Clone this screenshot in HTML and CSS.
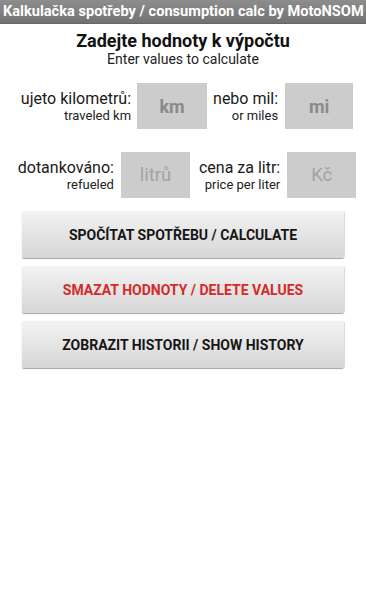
FILE: index.html
```html
<!DOCTYPE html>
<html lang="cs">
<head>
<meta charset="utf-8">
<title>Kalkulačka spotřeby</title>
<link rel="stylesheet" href="styles.css">
</head>
<body>
<header class="titlebar">Kalkulačka spotřeby / consumption calc by MotoNSOM</header>
<main class="content">
  <h1 class="heading">Zadejte hodnoty k výpočtu</h1>
  <p class="subheading">Enter values to calculate</p>

  <div class="row row-first">
    <div class="label"><span class="main">ujeto kilometrů:</span><span class="sub">traveled km</span></div>
    <div class="box box-strong">km</div>
    <div class="label"><span class="main">nebo mil:</span><span class="sub">or miles</span></div>
    <div class="box box-strong box-narrow">mi</div>
  </div>

  <div class="row row-second">
    <div class="label"><span class="main">dotankováno:</span><span class="sub">refueled</span></div>
    <div class="box box-hint">litrů</div>
    <div class="label label-wide"><span class="main">cena za litr:</span><span class="sub">price per liter</span></div>
    <div class="box box-hint">Kč</div>
  </div>

  <div class="buttons">
    <button class="btn">SPOČÍTAT SPOTŘEBU / CALCULATE</button>
    <button class="btn btn-danger">SMAZAT HODNOTY / DELETE VALUES</button>
    <button class="btn">ZOBRAZIT HISTORII / SHOW HISTORY</button>
  </div>
</main>
</body>
</html>
```

FILE: styles.css
```css
html, body {
  margin: 0;
  padding: 0;
  background: #ffffff;
}

body {
  font-family: Roboto, "Liberation Sans", sans-serif;
  color: #111111;
  width: 366px;
  height: 592px;
  overflow: hidden;
}

.titlebar {
  height: 24px;
  box-sizing: border-box;
  padding-left: 3px;
  background: linear-gradient(#8d8d8d, #727272);
  border-bottom: 1px solid #666666;
  color: #ffffff;
  font-weight: 700;
  font-size: 14.6px;
  line-height: 23px;
  white-space: nowrap;
}

.content {
  display: flex;
  flex-direction: column;
  align-items: stretch;
}

.heading {
  margin: 6px 0 0;
  text-align: center;
  font-size: 18px;
  line-height: 21px;
  font-weight: 700;
  color: #111111;
}

.subheading {
  margin: 0;
  text-align: center;
  font-size: 14px;
  line-height: 16px;
  color: #222222;
}

.row {
  display: flex;
  justify-content: center;
  align-items: center;
  padding-left: 8px;
}

.row-first {
  margin-top: 16px;
  gap: 6px;
}

.row-second {
  margin-top: 23px;
  gap: 7px;
}

.label {
  display: flex;
  flex-direction: column;
  align-items: flex-end;
  text-align: right;
  white-space: nowrap;
}

.label .main {
  font-size: 16px;
  line-height: 19px;
  color: #1a1a1a;
}

.label .sub {
  font-size: 13px;
  line-height: 15px;
  color: #222222;
}

.label-wide {
  margin-left: 2px;
}

.box {
  width: 70px;
  height: 46px;
  background: #cccccc;
  display: flex;
  align-items: center;
  justify-content: center;
  font-size: 18px;
}

.box-narrow {
  width: 68px;
  margin-left: 1px;
}

.box-strong {
  font-weight: 700;
  color: #8a8a8a;
}

.box-hint {
  width: 69px;
  font-size: 18.5px;
  color: #a3a3a3;
}

.buttons {
  margin-top: 13px;
  padding: 0 22px;
  display: flex;
  flex-direction: column;
  gap: 8px;
}

.btn {
  height: 47px;
  border: none;
  border-radius: 2px;
  background: linear-gradient(#f3f3f3, #d6d6d6);
  box-shadow: 0 1px 1px rgba(0, 0, 0, 0.35), 1px 0 1px rgba(0, 0, 0, 0.12);
  font-family: Roboto, "Liberation Sans", sans-serif;
  font-weight: 700;
  font-size: 14px;
  color: #161616;
  padding: 0;
}

.btn-danger {
  color: #d42a2a;
}
```
